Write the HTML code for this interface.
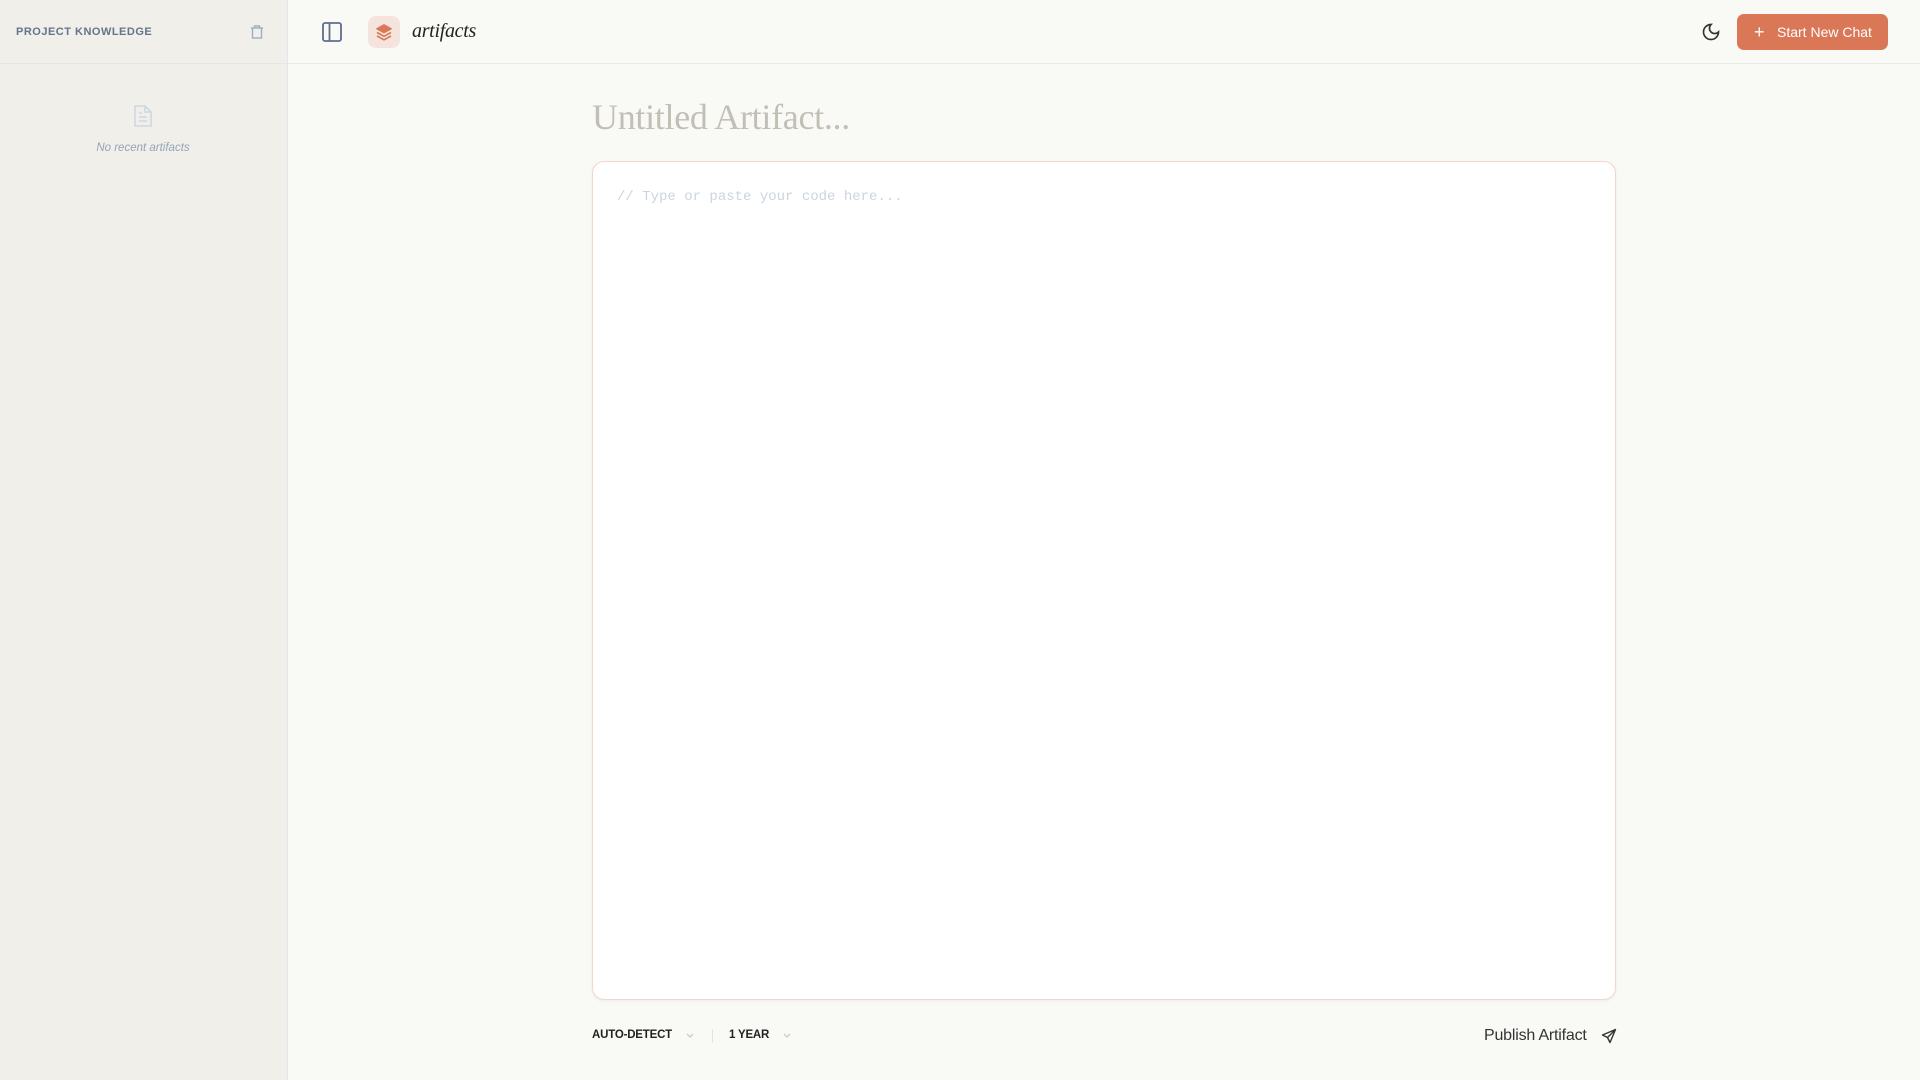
<!DOCTYPE html>
<html><head><meta charset="utf-8"><style>
*{box-sizing:border-box;margin:0;padding:0}
body{width:1920px;height:1080px;overflow:hidden;background:#f9f9f6;font-family:"Liberation Sans",sans-serif;position:relative}
.side{position:absolute;left:0;top:0;width:288px;height:1080px;background:#f0efea;border-right:1px solid #e1e6ee}
.sh{height:64px;border-bottom:1px solid #e3e6ea;position:relative}
.sh .t{position:absolute;left:16px;top:26px;font-size:11px;font-weight:bold;color:#64748b;letter-spacing:.5px}
.top{position:absolute;left:288px;top:0;right:0;height:64px;border-bottom:1px solid #ebebe6}
.abs{position:absolute}
</style></head><body>
<div class="side">
 <div class="sh"><div class="t">PROJECT KNOWLEDGE</div>
  <svg class="abs" style="left:250px;top:24px" width="14" height="16" viewBox="0 0 14 16" fill="none" stroke="#a3b0c2" stroke-width="1.5"><path d="M2.5 4h9v10h-9z M4.5 4V2h5v2 M1 4h12"/></svg>
 </div>
 <svg class="abs" style="left:133px;top:104px" width="20" height="24" viewBox="0 0 20 24" fill="none" stroke="#cfd7e2" stroke-width="1.6"><path d="M2 2h10l6 6v14H2z M12 2v6h6 M6 13h8 M6 17h8 M6 9h3"/></svg>
 <div class="abs" style="left:0;width:286px;top:142px;text-align:center;font-size:11.5px;font-style:italic;color:#94a3b8">No recent artifacts</div>
</div>
<div class="top">
 <svg class="abs" style="left:34px;top:22px" width="20" height="20" viewBox="0 0 20 20" fill="none" stroke="#5c6f8c" stroke-width="1.8"><rect x="1" y="1" width="18" height="18" rx="2"/><path d="M7.5 1v18"/></svg>
 <div class="abs" style="left:80px;top:16px;width:32px;height:32px;border-radius:8px;background:#f5e4dd"></div>
 <svg class="abs" style="left:87px;top:23px" width="18" height="18" viewBox="0 0 18 18" fill="#d97757" stroke="#d97757" stroke-width="1.6" stroke-linejoin="round"><path d="M9 2l7 3.8-7 3.8-7-3.8z"/><path d="M2 9.5l7 3.8 7-3.8" fill="none"/><path d="M2 13l7 3.8 7-3.8" fill="none"/></svg>
 <div class="abs" style="left:124px;top:20px;font-family:'Liberation Serif',serif;font-style:italic;font-size:20px;color:#222;letter-spacing:-.3px">artifacts</div>
 <svg class="abs" style="left:1413px;top:22px" width="20" height="20" viewBox="0 0 24 24" fill="none" stroke="#333" stroke-width="2" stroke-linecap="round"><path d="M12 3a6 6 0 0 0 9 9 9 9 0 1 1-9-9z"/></svg>
 <div class="abs" style="left:1449px;top:14px;width:151px;height:36px;border-radius:7px;background:#d97757;color:#fff;font-size:14px;line-height:37px;padding-left:40px">Start New Chat</div>
 <div class="abs" style="left:1466px;top:15px;color:#fff;font-size:18px;line-height:34px">+</div>
</div>
<div class="abs" style="left:592px;top:96px;font-family:'Liberation Serif',serif;font-size:36px;color:#c2bfb5;letter-spacing:-.3px">Untitled Artifact...</div>
<div class="abs" style="left:592px;top:161px;width:1024px;height:839px;background:#fff;border:1px solid #f0d6cc;border-radius:12px;box-shadow:0 1px 3px rgba(0,0,0,.05)"></div>
<div class="abs" style="left:617px;top:189px;font-family:'Liberation Mono',monospace;font-size:14px;color:#cbd5e1">// Type or paste your code here...</div>
<div class="abs" style="left:592px;top:1029px;font-size:11.5px;font-weight:bold;color:#222;letter-spacing:-.2px">AUTO-DETECT</div>
<svg class="abs" style="left:685px;top:1032px" width="10" height="8" viewBox="0 0 10 8" fill="none" stroke="#c5ccd6" stroke-width="1.3"><path d="M2 2l3 3 3-3"/></svg>
<div class="abs" style="left:712px;top:1029px;width:1px;height:14px;background:#dde3ea"></div>
<div class="abs" style="left:729px;top:1029px;font-size:11.5px;font-weight:bold;color:#222;letter-spacing:-.2px">1 YEAR</div>
<svg class="abs" style="left:782px;top:1032px" width="10" height="8" viewBox="0 0 10 8" fill="none" stroke="#c5ccd6" stroke-width="1.3"><path d="M2 2l3 3 3-3"/></svg>
<div class="abs" style="left:1484px;top:1027px;font-size:16px;color:#333;letter-spacing:-.2px">Publish Artifact</div>
<svg class="abs" style="left:1601px;top:1028px" width="16" height="16" viewBox="0 0 16 16" fill="none" stroke="#333" stroke-width="1.4" stroke-linejoin="round"><path d="M14.5 1.5L1.5 7l5 2.5 2.5 5z M14.5 1.5L6.5 9.5"/></svg>
</body></html>
